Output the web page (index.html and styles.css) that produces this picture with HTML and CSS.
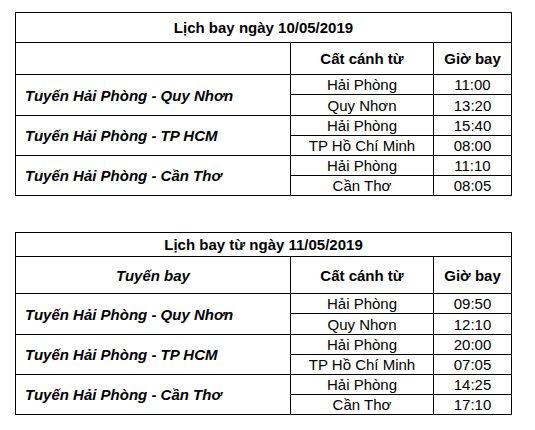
FILE: index.html
```html
<!DOCTYPE html>
<html lang="vi">
<head>
<meta charset="utf-8">
<title>Lịch bay</title>
<link rel="stylesheet" href="styles.css">
</head>
<body>
<div class="page">
  <table class="sched first">
    <colgroup><col class="c1"><col class="c2"><col class="c3"></colgroup>
    <tr class="title t1"><td colspan="3">Lịch bay ngày 10/05/2019</td></tr>
    <tr class="head h1"><td class="route-h"></td><td>Cất cánh từ</td><td>Giờ bay</td></tr>
    <tr class="sub a"><td class="route" rowspan="2">Tuyến Hải Phòng - Quy Nhơn</td><td>Hải Phòng</td><td>11:00</td></tr>
    <tr class="sub b"><td>Quy Nhơn</td><td>13:20</td></tr>
    <tr class="sub a"><td class="route" rowspan="2">Tuyến Hải Phòng - TP HCM</td><td>Hải Phòng</td><td>15:40</td></tr>
    <tr class="sub a"><td>TP Hồ Chí Minh</td><td>08:00</td></tr>
    <tr class="sub a"><td class="route" rowspan="2">Tuyến Hải Phòng - Cần Thơ</td><td>Hải Phòng</td><td>11:10</td></tr>
    <tr class="sub a"><td>Cần Thơ</td><td>08:05</td></tr>
  </table>

  <table class="sched second">
    <colgroup><col class="c1"><col class="c2"><col class="c3"></colgroup>
    <tr class="title t2"><td colspan="3">Lịch bay từ ngày 11/05/2019</td></tr>
    <tr class="head h2"><td class="route-h">Tuyến bay</td><td>Cất cánh từ</td><td>Giờ bay</td></tr>
    <tr class="sub a"><td class="route" rowspan="2">Tuyến Hải Phòng - Quy Nhơn</td><td>Hải Phòng</td><td>09:50</td></tr>
    <tr class="sub b"><td>Quy Nhơn</td><td>12:10</td></tr>
    <tr class="sub a"><td class="route" rowspan="2">Tuyến Hải Phòng - TP HCM</td><td>Hải Phòng</td><td>20:00</td></tr>
    <tr class="sub a"><td>TP Hồ Chí Minh</td><td>07:05</td></tr>
    <tr class="sub a"><td class="route" rowspan="2">Tuyến Hải Phòng - Cần Thơ</td><td>Hải Phòng</td><td>14:25</td></tr>
    <tr class="sub a"><td>Cần Thơ</td><td>17:10</td></tr>
  </table>
</div>
</body>
</html>
```

FILE: styles.css
```css
html, body {
  margin: 0;
  padding: 0;
  background: #ffffff;
}

body {
  font-family: "Liberation Sans", Arial, sans-serif;
  color: #000000;
}

.page {
  padding: 12px 0 0 15px;
}

.sched {
  border-collapse: collapse;
  width: 496px;
  table-layout: fixed;
  font-size: 15px;
  line-height: 17px;
}

.second {
  margin-top: 36px;
}

.c1 { width: 275px; }
.c2 { width: 143px; }
.c3 { width: 78px; }

.sched td {
  border: 1px solid #000000;
  padding: 0;
  text-align: center;
  vertical-align: middle;
  white-space: nowrap;
}

.title td {
  font-weight: bold;
}

.t1 { height: 30px; }
.t2 { height: 24px; }

.head td {
  font-weight: bold;
}

.h1 { height: 32px; }
.h2 { height: 37px; }

.head .route-h {
  font-style: italic;
}

.sub.a { height: 20px; }
.sub.b { height: 21px; }

.sched td.route {
  text-align: left;
  padding-left: 9px;
  font-weight: bold;
  font-style: italic;
}
```
